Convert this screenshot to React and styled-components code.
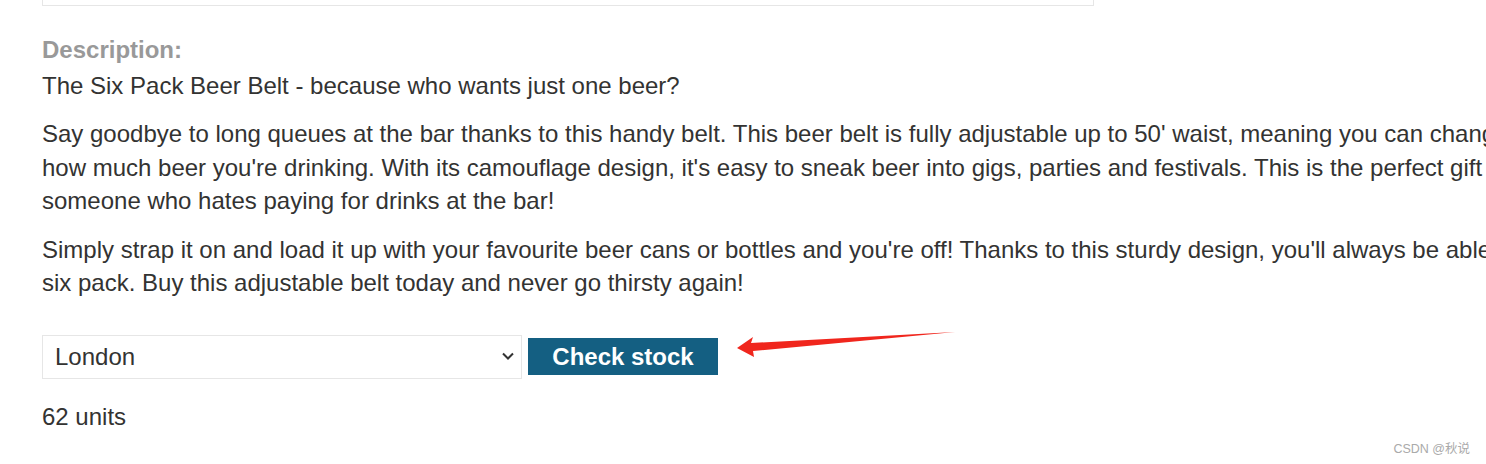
import React from 'react'
import styled, { createGlobalStyle } from 'styled-components'

const GlobalStyle = createGlobalStyle`
  html, body {
    margin: 0;
    padding: 0;
    background: #fff;
    overflow: hidden;
  }
  body {
    font-family: "Liberation Sans", Arial, sans-serif;
    color: #333332;
  }
`

const Page = styled.div`
  position: relative;
  width: 1486px;
  height: 464px;
  overflow: hidden;
`

const Content = styled.div`
  width: 1700px;
  padding-left: 42px;
  font-size: 24px;
  line-height: 33.5px;
`

const TopBox = styled.div`
  width: 1050px;
  height: 5px;
  border: 1px solid #e6e6e6;
  border-top: none;
`

const Label = styled.div`
  margin: 27px 0 2px;
  font-weight: bold;
  color: #999;
`

const Para = styled.p`
  margin: 0 0 15px;
  white-space: nowrap;
`

const StockForm = styled.form`
  display: flex;
  align-items: center;
  gap: 6px;
  margin-top: 35px;
`

const SelectWrap = styled.div`
  position: relative;
  width: 480px;
  height: 44px;
  box-sizing: border-box;
  border: 1px solid #e6e6e6;
  display: flex;
  align-items: center;
  padding-left: 12px;
  color: #333332;
`

const Chevron = styled.svg`
  position: absolute;
  right: 6px;
  top: 15px;
`

const Button = styled.button`
  height: 37px;
  width: 190px;
  border: none;
  background: #145f82;
  color: #fff;
  font-family: "Liberation Sans", Arial, sans-serif;
  font-weight: bold;
  font-size: 24px;
  padding: 0;
`

const Result = styled.div`
  margin-top: 21px;
`

const Arrow = styled.svg`
  position: absolute;
  left: 730px;
  top: 322px;
`

const Watermark = styled.div`
  position: absolute;
  right: 16px;
  bottom: 7px;
  font-size: 12.5px;
  color: #aaa;
  font-family: "Liberation Sans", "Noto Sans CJK SC", sans-serif;
`

export default function App() {
  return (
    <Page>
      <GlobalStyle />
      <Content>
        <TopBox />
        <Label>Description:</Label>
        <Para>The Six Pack Beer Belt - because who wants just one beer?</Para>
        <Para>
          Say goodbye to long queues at the bar thanks to this handy belt. This beer belt is fully adjustable up to 50' waist, meaning you can change
          <br />
          how much beer you're drinking. With its camouflage design, it's easy to sneak beer into gigs, parties and festivals. This is the perfect gift for
          <br />
          someone who hates paying for drinks at the bar!
        </Para>
        <Para>
          Simply strap it on and load it up with your favourite beer cans or bottles and you're off! Thanks to this sturdy design, you'll always be able to boast a
          <br />
          six pack. Buy this adjustable belt today and never go thirsty again!
        </Para>
        <StockForm onSubmit={e => e.preventDefault()}>
          <SelectWrap>
            London
            <Chevron width="14" height="10" viewBox="0 0 14 10">
              <path d="M2 2.5 L7 7.5 L12 2.5" fill="none" stroke="#333" strokeWidth="2" />
            </Chevron>
          </SelectWrap>
          <Button type="submit">Check stock</Button>
        </StockForm>
        <Result>62 units</Result>
      </Content>
      <Arrow width="240" height="40" viewBox="0 0 240 40">
        <path d="M7 26 L23 15 L21 21 L225 10 L23 29 L24 35 Z" fill="#f0261d" />
      </Arrow>
      <Watermark>CSDN @秋说</Watermark>
    </Page>
  )
}
